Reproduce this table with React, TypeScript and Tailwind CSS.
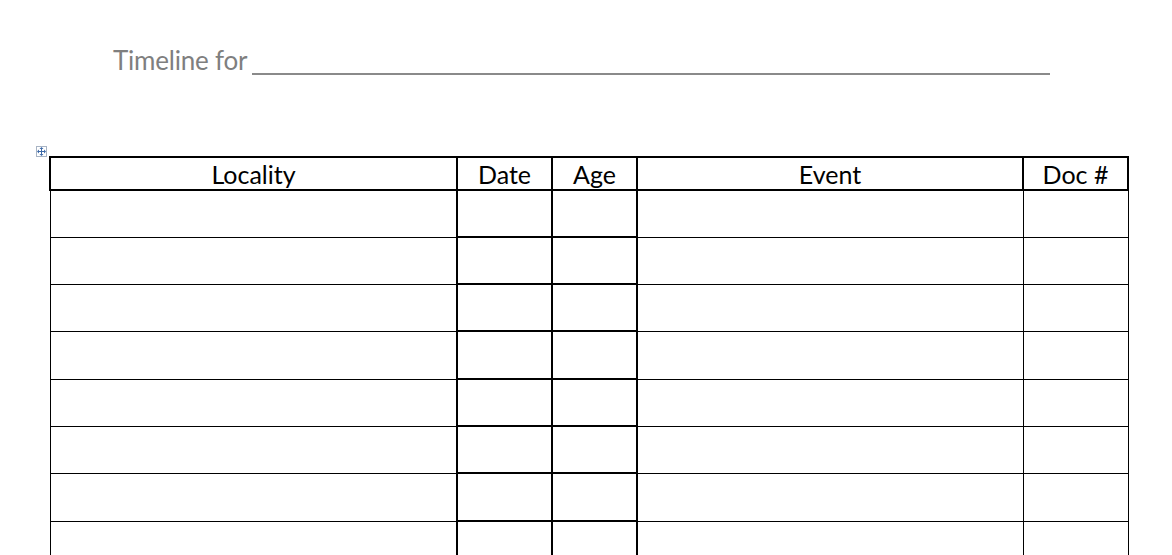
const columns = [
  { label: 'Locality', width: 'w-[407px]' },
  { label: 'Date', width: 'w-[95px]' },
  { label: 'Age', width: 'w-[85px]' },
  { label: 'Event', width: 'w-[386px]' },
  { label: 'Doc #', width: 'w-[105px]' },
];

// row heights follow Word's rounding: some rows are a pixel taller
const rowHeights = ['h-[47px]', 'h-[47px]', 'h-[47px]', 'h-[48px]', 'h-[47px]', 'h-[47px]', 'h-[48px]', 'h-[47px]'];

function MoveHandle() {
  return (
    <div className="flex h-[11px] w-[11px] items-center justify-center border border-[#a8b4c4] bg-white">
      <svg width="9" height="9" viewBox="0 0 9 9" fill="#3d6aa8">
        <rect x="4" y="1" width="1" height="7" />
        <rect x="1" y="4" width="7" height="1" />
        <path d="M4.5 0 L6.5 2 L2.5 2 Z" />
        <path d="M4.5 9 L6.5 7 L2.5 7 Z" />
        <path d="M0 4.5 L2 2.5 L2 6.5 Z" />
        <path d="M9 4.5 L7 2.5 L7 6.5 Z" />
      </svg>
    </div>
  );
}

export default function App() {
  return (
    <div className="h-[555px] w-[1172px] overflow-hidden bg-white font-['Lato',sans-serif]">
      <div className="flex items-end pl-[113px] pt-[44px] text-[26px] leading-[32px] tracking-[-0.2px] text-[#7f7f7f]">
        <span>Timeline for</span>
        <span className="mb-[1px] ml-[5px] inline-block w-[798px] border-b-2 border-[#8a8a8a]"></span>
      </div>

      <div className="mt-[69px] flex pl-[36px]">
        <div className="pt-[1px]">
          <MoveHandle />
        </div>
        <table className="ml-[2px] mt-[11px] table-fixed border-collapse">
          <thead>
            <tr className="h-[33px]">
              {columns.map((c) => (
                <th
                  key={c.label}
                  className={`${c.width} border-2 border-black p-0 pt-[1px] text-center text-[25px] font-normal leading-[30px] text-black`}
                >
                  {c.label}
                </th>
              ))}
            </tr>
          </thead>
          <tbody>
            {rowHeights.map((h, r) => (
              <tr key={r} className={h}>
                <td className="border border-black p-0"></td>
                <td className="border-2 border-black p-0"></td>
                <td className="border-2 border-black p-0"></td>
                <td className="border border-black p-0"></td>
                <td className="border border-black p-0"></td>
              </tr>
            ))}
          </tbody>
        </table>
      </div>
    </div>
  );
}
